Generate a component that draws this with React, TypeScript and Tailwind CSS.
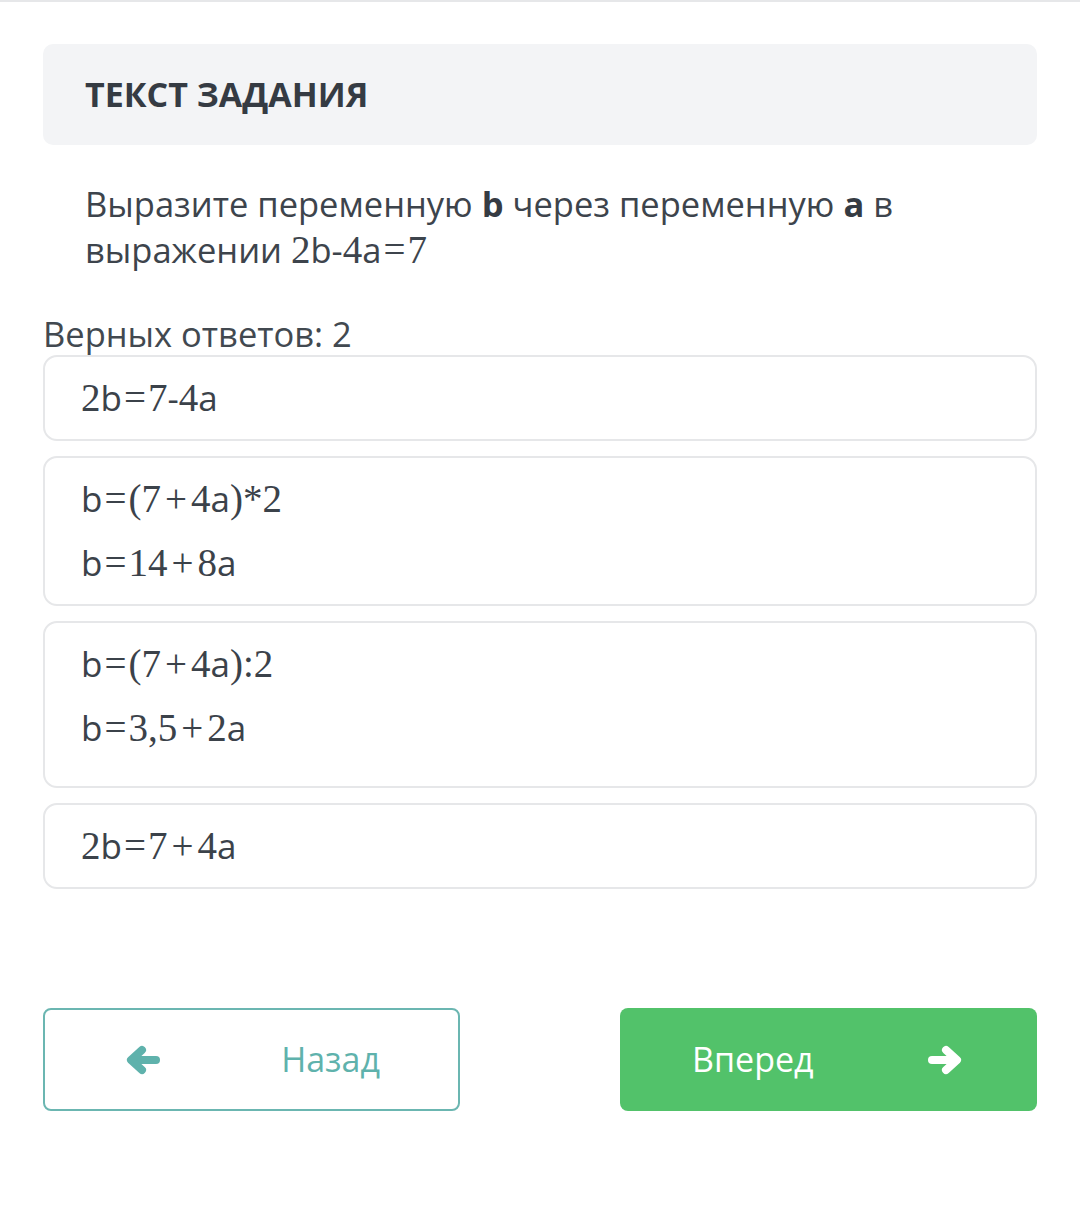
import React from "react";

function M({ t }: { t: string }) {
  const parts: React.ReactNode[] = [];
  t.split("").forEach((ch, i) => {
    if (ch === "a" || ch === "b" || ch === "-") {
      parts.push(<span key={i}>{ch}</span>);
    } else if (ch === "=") {
      parts.push(
        <span key={i} className="font-['Liberation_Serif'] text-[39px] mx-[2px]">
          =
        </span>
      );
    } else if (ch === "+") {
      parts.push(
        <span key={i} className="font-['Liberation_Serif'] text-[39px] mx-[4px]">
          +
        </span>
      );
    } else {
      parts.push(
        <span key={i} className="font-['Liberation_Serif'] text-[39px]">
          {ch}
        </span>
      );
    }
  });
  return <span className="whitespace-nowrap">{parts}</span>;
}

const Arrow = ({ dir }: { dir: "left" | "right" }) => (
  <svg width="36" height="32" viewBox="0 0 36 32" fill="none">
    <g
      stroke="currentColor"
      strokeWidth="8"
      strokeLinecap="round"
      strokeLinejoin="round"
      transform={dir === "right" ? "translate(36 0) scale(-1 1)" : undefined}
    >
      <path d="M31 16 H8" />
      <path d="M17 6 L6 16 L17 26" />
    </g>
  </svg>
);

function Option({ lines, extra }: { lines: string[]; extra?: boolean }) {
  return (
    <div
      className={`border-2 border-[#e6e7e9] rounded-[14px] px-[36px] ${
        extra ? "pt-[19px] pb-[36px]" : "py-[19px]"
      } flex flex-col gap-[20px]`}
    >
      {lines.map((l, i) => (
        <div key={i} className="h-[44px] leading-[44px] text-[35px] text-[#3b424a] whitespace-nowrap">
          <M t={l} />
        </div>
      ))}
    </div>
  );
}

export default function App() {
  return (
    <div className="w-[1080px] h-[1206px] bg-white border-t-2 border-[#e6e7e9] font-['Open_Sans',sans-serif] text-[#3b424a]">
      <div className="px-[43px] pt-[42px]">
        <div className="bg-[#f3f4f6] rounded-[10px] h-[101px] flex items-center px-[42px]">
          <span className="text-[34px] font-bold text-[#353b43]">ТЕКСТ ЗАДАНИЯ</span>
        </div>
        <div className="px-[42px] pt-[36px] text-[34.5px] leading-[46px] text-[#3d444c]">
          Выразите переменную <b className="text-[#353b43]">b</b> через переменную{" "}
          <b className="text-[#353b43]">a</b> в выражении <M t="2b-4a=7" />
        </div>
        <div className="pt-[40px] text-[34.5px] leading-[42px] text-[#424950]">Верных ответов: 2</div>
        <div className="flex flex-col gap-[15px]">
          <Option lines={["2b=7-4a"]} />
          <Option lines={["b=(7+4a)*2", "b=14+8a"]} />
          <Option extra lines={["b=(7+4a):2", "b=3,5+2a"]} />
          <Option lines={["2b=7+4a"]} />
        </div>
        <div className="flex justify-between mt-[119px]">
          <button className="w-[417px] h-[103px] border-2 border-[#6bb6b1] rounded-[8px] flex items-center pl-[80px] pr-[78px] justify-between text-[#5fb2ac]">
            <Arrow dir="left" />
            <span className="text-[34px]">Назад</span>
          </button>
          <button className="w-[417px] h-[103px] bg-[#52c26a] rounded-[8px] flex items-center pl-[72px] pr-[74px] justify-between text-white">
            <span className="text-[34px]">Вперед</span>
            <Arrow dir="right" />
          </button>
        </div>
      </div>
    </div>
  );
}
